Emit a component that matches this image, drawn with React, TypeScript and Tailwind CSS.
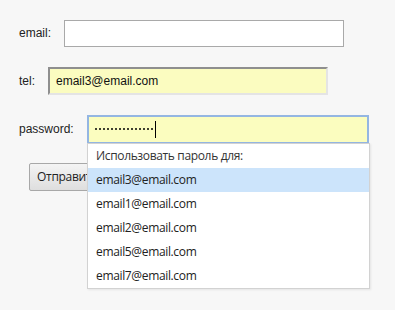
import React from 'react';

const suggestions = [
  'email3@email.com',
  'email1@email.com',
  'email2@email.com',
  'email5@email.com',
  'email7@email.com',
];

const App: React.FC = () => {
  return (
    <div className="w-[395px] h-[310px] bg-[#f7f7f7] overflow-hidden font-['Liberation_Sans',Arial,sans-serif] text-[12px] text-[#222]">
      <div className="relative pt-[19px] pl-[19px] flex flex-col gap-[20px]">
        {/* email */}
        <div className="flex items-center h-[28px]">
          <span className="w-[45px]">email:</span>
          <input
            type="text"
            readOnly
            className="w-[280px] h-[27px] bg-white border border-[#a9a9a9] outline-none"
          />
        </div>

        {/* tel */}
        <div className="flex items-center h-[28px]">
          <span className="w-[29px]">tel:</span>
          <div className="w-[280px] h-[28px] bg-[#fbfcc0] border-2 border-t-[#8f8f8f] border-l-[#8f8f8f] border-r-[#e4e4e4] border-b-[#e4e4e4] flex items-center pl-[6px] text-[12px] text-[#111]">
            email3@email.com
          </div>
        </div>

        {/* password */}
        <div className="flex items-center h-[28px]">
          <span className="w-[68px]">password:</span>
          <div className="w-[282px] h-[29px] bg-[#fbfdbf] border-2 border-[#94b6e2] flex items-center pl-[6px]">
            <div className="flex gap-[2px]">
              {Array.from({ length: 15 }).map((_, i) => (
                <span key={i} className="w-[2px] h-[2px] bg-black rounded-full" />
              ))}
            </div>
            <span className="ml-[2px] w-px h-[17px] bg-black" />
          </div>
        </div>

        {/* submit */}
        <div className="pl-[10px]">
          <button className="h-[28px] px-[7px] border border-[#a8a8a8] rounded-[2px] bg-gradient-to-b from-[#f4f4f4] to-[#dedede] font-['Open_Sans',sans-serif] text-[12px] tracking-[-0.3px] text-[#222]">
            Отправить
          </button>
        </div>

        {/* autofill dropdown */}
        <div className="absolute left-[87px] top-[143px] w-[283px] bg-white border border-[#d2d2d2] shadow-[1px_1px_2px_rgba(0,0,0,0.08)] font-['Open_Sans',sans-serif] text-[12px] tracking-[-0.35px] text-[#222]">
          <div className="h-[24px] flex items-center pl-[8px] text-[#333]">Использовать пароль для:</div>
          {suggestions.map((s, i) => (
            <div
              key={s}
              className={`h-[24px] flex items-center pl-[8px] ${i === 0 ? 'bg-[#cce4fb]' : ''}`}
            >
              {s}
            </div>
          ))}
        </div>
      </div>
    </div>
  );
};

export default App;
